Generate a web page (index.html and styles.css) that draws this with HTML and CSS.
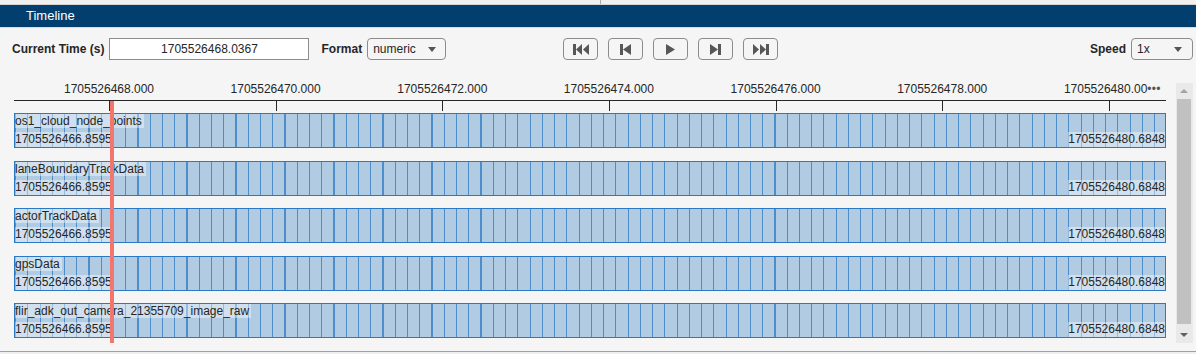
FILE: index.html
```html
<!DOCTYPE html>
<html lang="en">
<head>
    <meta charset="UTF-8">
    <title>Timeline</title>
    <link rel="stylesheet" href="styles.css">
</head>
<body>
    <div class="topbar"><div class="topbar-split"></div></div>

    <div class="panel">
        <div class="panel-title">Timeline</div>

        <div class="controls">
            <label class="field-label" for="currentTime">Current Time (s)</label>
            <input id="currentTime" class="time-input" type="text" value="1705526468.0367">
            <span class="field-label format-label">Format</span>
            <div class="dropdown format-dropdown"><span>numeric</span><span class="caret"></span></div>

            <div class="player">
                <button class="play-btn" title="First">
                    <svg width="16" height="11" viewBox="0 0 16 11"><rect x="0" y="0" width="3" height="11"/><polygon points="9,0 3,5.5 9,11"/><polygon points="16,0 10,5.5 16,11"/></svg>
                </button>
                <button class="play-btn" title="Previous">
                    <svg width="11" height="11" viewBox="0 0 11 11"><rect x="0" y="0" width="3" height="11"/><polygon points="11,0 3,5.5 11,11"/></svg>
                </button>
                <button class="play-btn" title="Play">
                    <svg width="9" height="11" viewBox="0 0 9 11"><polygon points="0,0 9,5.5 0,11"/></svg>
                </button>
                <button class="play-btn" title="Next">
                    <svg width="11" height="11" viewBox="0 0 11 11"><polygon points="0,0 8,5.5 0,11"/><rect x="8" y="0" width="3" height="11"/></svg>
                </button>
                <button class="play-btn" title="Last">
                    <svg width="16" height="11" viewBox="0 0 16 11"><polygon points="0,0 6,5.5 0,11"/><polygon points="7,0 13,5.5 7,11"/><rect x="13" y="0" width="3" height="11"/></svg>
                </button>
            </div>

            <div class="speed">
                <span class="field-label">Speed</span>
                <div class="dropdown speed-dropdown"><span>1x</span><span class="caret"></span></div>
            </div>
        </div>

        <div class="plot-area">
            <div class="plot">
                <div class="axis">
                    <div class="tick" style="left:95px"><span>1705526468.000</span></div>
                    <div class="tick" style="left:261.6px"><span>1705526470.000</span></div>
                    <div class="tick" style="left:428.3px"><span>1705526472.000</span></div>
                    <div class="tick" style="left:594.9px"><span>1705526474.000</span></div>
                    <div class="tick" style="left:761.6px"><span>1705526476.000</span></div>
                    <div class="tick" style="left:928.2px"><span>1705526478.000</span></div>
                    <div class="tick tick-clipped" style="left:1094.9px"><span>1705526480.00<i class="more">•••</i></span></div>
                </div>

                <div class="tracks">
                    <div class="track">
                        <span class="track-name">os1_cloud_node_points</span>
                        <div class="track-times"><span>1705526466.8595</span><span>1705526480.6848</span></div>
                    </div>
                    <div class="track">
                        <span class="track-name">laneBoundaryTrackData</span>
                        <div class="track-times"><span>1705526466.8595</span><span>1705526480.6848</span></div>
                    </div>
                    <div class="track">
                        <span class="track-name">actorTrackData</span>
                        <div class="track-times"><span>1705526466.8595</span><span>1705526480.6848</span></div>
                    </div>
                    <div class="track">
                        <span class="track-name">gpsData</span>
                        <div class="track-times"><span>1705526466.8595</span><span>1705526480.6848</span></div>
                    </div>
                    <div class="track">
                        <span class="track-name">flir_adk_out_camera_21355709_image_raw</span>
                        <div class="track-times"><span>1705526466.8595</span><span>1705526480.6848</span></div>
                    </div>
                </div>

                <div class="cursor" style="left:96px"></div>
            </div>

            <div class="scrollbar">
                <div class="scroll-arrow up"></div>
                <div class="scroll-thumb"></div>
                <div class="scroll-arrow down"></div>
            </div>
        </div>
    </div>
</body>
</html>
```

FILE: styles.css
```css
/* Reset */
* {
    margin: 0;
    padding: 0;
    box-sizing: border-box;
    font-family: "Liberation Sans", Arial, sans-serif;
}

:root {
    --title-blue: #023f6f;
    --panel-bg: #f5f5f5;
    --text: #262626;
    --track-fill: #b1cbe3;
    --track-line: #4f8dca;
    --track-border: #2b79c4;
    --cursor: #f0766e;
    --icon: #575757;
}

body {
    width: 1196px;
    height: 354px;
    overflow: hidden;
    background-color: #f0f0f0;
    color: var(--text);
    font-size: 12px;
}

/* Strip above panel */
.topbar {
    height: 5px;
    border-bottom: 1px solid #d5d5d5;
}

.topbar-split {
    margin-left: 600px;
    width: 1px;
    height: 4px;
    background-color: #ababab;
}

/* Panel */
.panel {
    height: 347px;
    background-color: var(--panel-bg);
    border-bottom: 1px solid #a0a0a0;
}

.panel-title {
    height: 23px;
    line-height: 22px;
    padding-left: 26px;
    font-size: 13px;
    color: #ffffff;
    background-color: var(--title-blue);
    border-bottom: 1px solid #dcdcdc;
}

/* Controls row */
.controls {
    display: flex;
    align-items: center;
    height: 22px;
    margin-top: 10px;
    padding: 0 3px 0 12px;
}

.field-label {
    font-weight: bold;
    font-size: 12px;
    color: var(--text);
}

.time-input {
    width: 200px;
    height: 22px;
    margin-left: 5px;
    border: 1px solid #8c8c8c;
    background-color: #ffffff;
    text-align: center;
    font-size: 12px;
    color: var(--text);
    outline: none;
}

.format-label {
    margin-left: 12px;
}

.dropdown {
    display: flex;
    align-items: center;
    justify-content: space-between;
    height: 22px;
    padding: 0 9px 0 5px;
    border: 1px solid #8c8c8c;
    border-radius: 4px;
    background-color: var(--panel-bg);
    font-size: 12px;
}

.format-dropdown {
    width: 79px;
    margin-left: 5px;
}

.speed-dropdown {
    width: 62px;
    margin-left: 5px;
    padding-right: 10px;
}

.caret {
    width: 0;
    height: 0;
    border-left: 4px solid transparent;
    border-right: 4px solid transparent;
    border-top: 5px solid #555;
}

.player {
    display: flex;
    gap: 10px;
    margin-left: 117px;
}

.play-btn {
    display: flex;
    align-items: center;
    justify-content: center;
    width: 35px;
    height: 22px;
    border: 1px solid #8c8c8c;
    border-radius: 4px;
    background-color: var(--panel-bg);
    fill: var(--icon);
    cursor: pointer;
}

.speed {
    display: flex;
    align-items: center;
    margin-left: auto;
}

/* Plot */
.plot-area {
    display: flex;
    margin-top: 22px;
}

.plot {
    position: relative;
    width: 1152px;
    margin-left: 14px;
}

.axis {
    position: relative;
    height: 19px;
    border-bottom: 1px solid #262626;
}

.tick {
    position: absolute;
    top: 0;
    width: 1px;
    height: 29px;
}

.tick span {
    position: absolute;
    top: 0;
    left: 0;
    transform: translateX(-50%);
    white-space: nowrap;
    line-height: 14px;
}

.tick-clipped span {
    transform: translateX(-45px);
}

.more {
    font-style: normal;
    color: #555;
    letter-spacing: 0.3px;
}

.tick::after {
    content: "";
    position: absolute;
    left: 0;
    top: 19px;
    width: 1px;
    height: 10px;
    background-color: #262626;
}

.tracks {
    display: flex;
    flex-direction: column;
    gap: 12.5px;
    margin-top: 12px;
}

.track {
    display: flex;
    flex-direction: column;
    justify-content: space-between;
    height: 35px;
    border: 1px solid var(--track-border);
    background: repeating-linear-gradient(90deg, var(--track-line) 0 1px, var(--track-fill) 1px 12.25px);
}

.track-name,
.track-times span {
    line-height: 14px;
    background-color: rgba(255, 255, 255, 0.4);
    color: var(--text);
}

.track-name {
    align-self: flex-start;
    padding-right: 2px;
}

.track-times {
    display: flex;
    justify-content: space-between;
}

.track-times span {
    line-height: 15px;
}

.cursor {
    position: absolute;
    top: 19px;
    width: 4px;
    height: 242px;
    background-color: var(--cursor);
}

/* Scrollbar */
.scrollbar {
    display: flex;
    flex-direction: column;
    align-items: center;
    width: 17px;
    height: 260px;
    margin: 1px 0 0 10px;
    padding: 0 2px 0 1px;
    background-color: #e9e9e9;
}

.scroll-arrow {
    height: 16px;
    display: flex;
    align-items: center;
}

.scroll-arrow::before {
    content: "";
    width: 0;
    height: 0;
    border-left: 4px solid transparent;
    border-right: 4px solid transparent;
}

.scroll-arrow.up::before {
    border-bottom: 4px solid #a3a3a3;
}

.scroll-arrow.down::before {
    border-top: 4px solid #606060;
}

.scroll-thumb {
    flex: 1;
    width: 14px;
    margin: 0 0 3px;
    background-color: #c1c1c1;
}
```
